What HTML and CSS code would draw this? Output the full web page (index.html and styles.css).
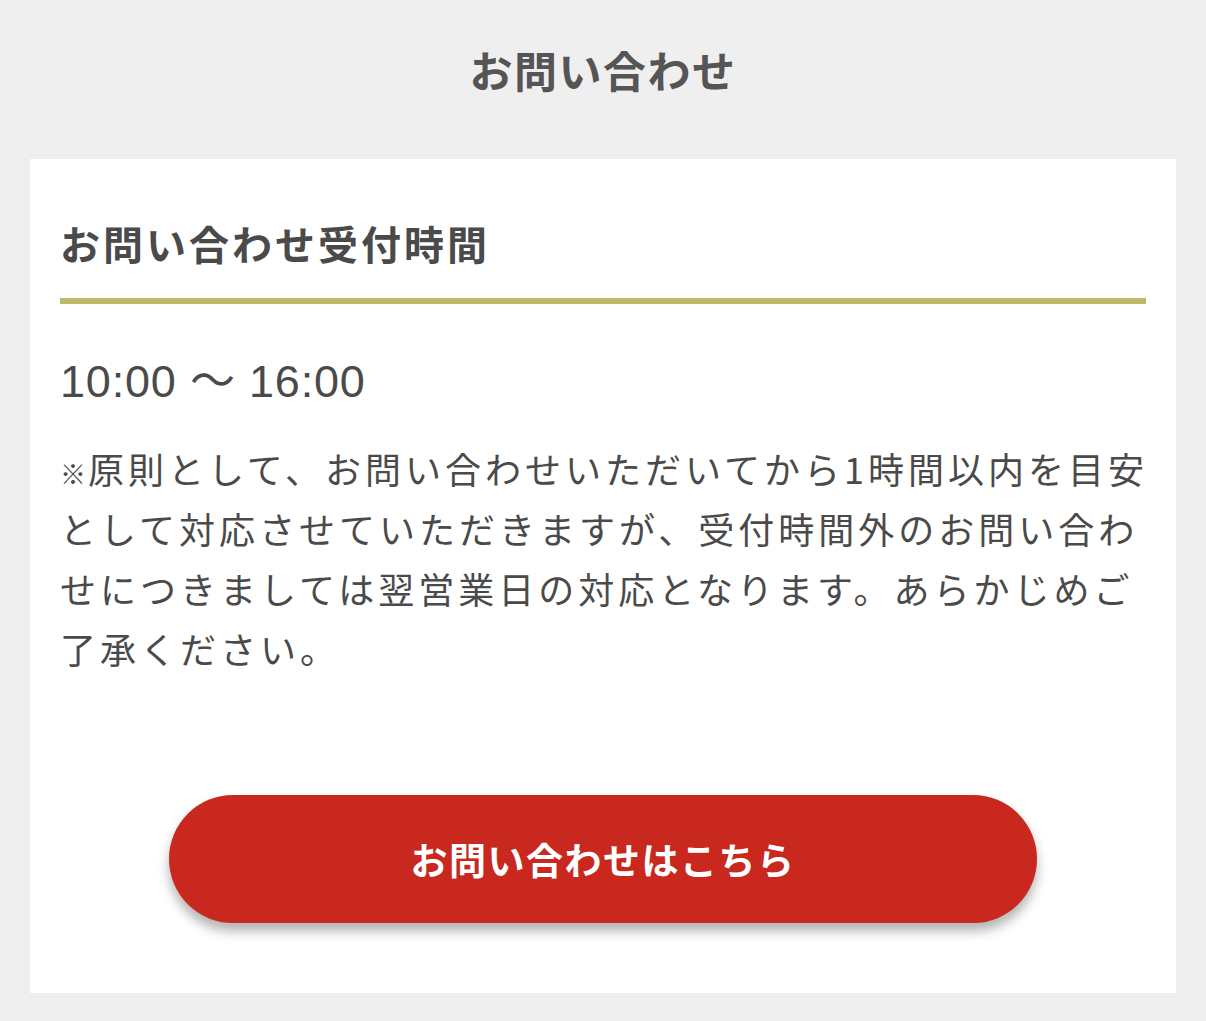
FILE: index.html
```html
<!DOCTYPE html>
<html lang="ja">
<head>
  <meta charset="UTF-8">
  <meta name="viewport" content="width=device-width, initial-scale=1.0">
  <title>お問い合わせ</title>
  <link rel="stylesheet" href="styles.css">
</head>
<body>

  <header class="page-header">
    <h1>お問い合わせ</h1>
  </header>

  <!-- Contact hours card -->
  <section class="card">
    <h2 class="card-title">お問い合わせ受付時間</h2>
    <p class="hours">10:00 〜 16:00</p>
    <p class="note"><span class="note-mark">※</span>原則として、お問い合わせいただいてから1時間以内を目安として対応させていただきますが、受付時間外のお問い合わせにつきましては翌営業日の対応となります。あらかじめご了承ください。</p>

    <div class="button-row">
      <a href="#" class="contact-btn">お問い合わせはこちら</a>
    </div>
  </section>

</body>
</html>
```

FILE: styles.css
```css
body {
  font-family: "Noto Sans CJK JP", "Noto Sans", sans-serif;
  background-color: #efefef;
  color: #4a4a4a;
  margin: 0;
  padding: 0 30px 28px;
}
.page-header {
  height: 159px;
  display: flex;
  justify-content: center;
  align-items: center;
}
.page-header h1 {
  margin: 0;
  padding-bottom: 22px;
  font-size: 43px;
  letter-spacing: 1.5px;
  font-weight: bold;
  color: #555;
}
.card {
  background-color: #fff;
  padding: 54px 30px 70px;
}
.card-title {
  margin: 0;
  font-size: 40px;
  line-height: 60px;
  letter-spacing: 3px;
  font-weight: bold;
  padding-bottom: 25px;
  border-bottom: 6px solid #bcb96a;
}
.hours {
  margin: 48px 0 0;
  font-family: "Liberation Sans", "Noto Sans CJK JP", sans-serif;
  font-size: 45px;
  line-height: 60px;
  letter-spacing: 0.8px;
}
.note {
  margin: 26px -12px 0 0;
  font-size: 36px;
  line-height: 60px;
  letter-spacing: 4px;
}
.note-mark {
  font-size: 0.72em;
  line-height: 0;
  letter-spacing: 2px;
}
.button-row {
  display: flex;
  justify-content: center;
  margin-top: 117px;
}
.contact-btn {
  width: 868px;
  height: 128px;
  display: flex;
  justify-content: center;
  align-items: center;
  background-color: #c8281e;
  color: #fff;
  font-size: 37px;
  font-weight: bold;
  letter-spacing: 1.5px;
  text-decoration: none;
  border-radius: 64px;
  box-shadow: 0 8px 12px rgba(0, 0, 0, 0.3);
}
```
